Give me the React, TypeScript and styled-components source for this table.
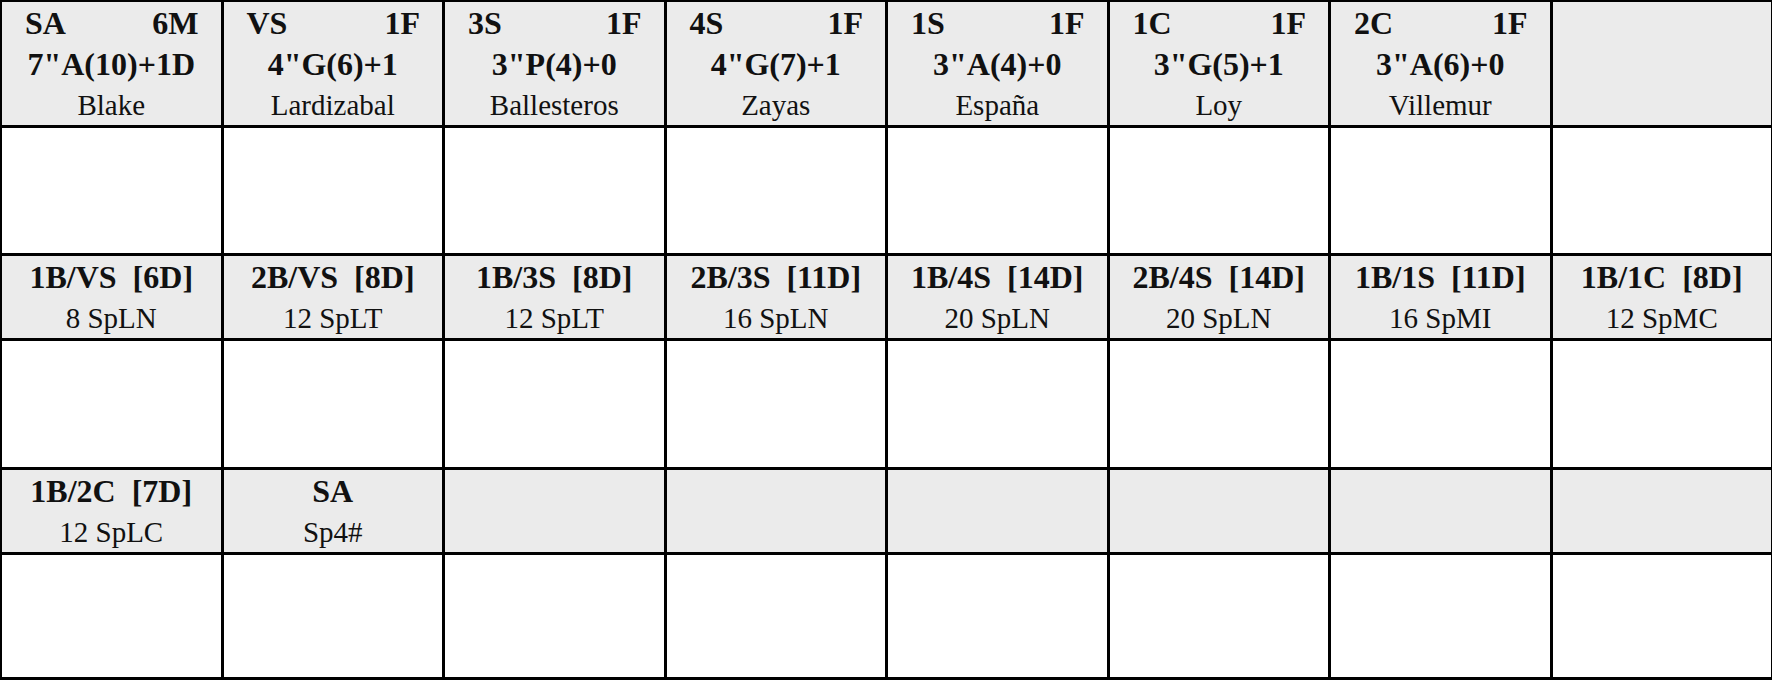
import { createGlobalStyle } from "styled-components";
import styled from "styled-components";

const GlobalStyle = createGlobalStyle`
  html, body {
    margin: 0;
    padding: 0;
    overflow: hidden;
    background: #ffffff;
  }
  body {
    font-family: "Liberation Serif", "Times New Roman", serif;
    color: #111;
  }
`;

type Leader = {
  unit: string;
  count: string;
  stats: string;
  name: string;
};

type Battery = {
  title: string;
  detail: string;
};

const leaders: (Leader | null)[] = [
  { unit: "SA", count: "6M", stats: '7"A(10)+1D', name: "Blake" },
  { unit: "VS", count: "1F", stats: '4"G(6)+1', name: "Lardizabal" },
  { unit: "3S", count: "1F", stats: '3"P(4)+0', name: "Ballesteros" },
  { unit: "4S", count: "1F", stats: '4"G(7)+1', name: "Zayas" },
  { unit: "1S", count: "1F", stats: '3"A(4)+0', name: "España" },
  { unit: "1C", count: "1F", stats: '3"G(5)+1', name: "Loy" },
  { unit: "2C", count: "1F", stats: '3"A(6)+0', name: "Villemur" },
  null,
];

const batteries: (Battery | null)[] = [
  { title: "1B/VS  [6D]", detail: "8 SpLN" },
  { title: "2B/VS  [8D]", detail: "12 SpLT" },
  { title: "1B/3S  [8D]", detail: "12 SpLT" },
  { title: "2B/3S  [11D]", detail: "16 SpLN" },
  { title: "1B/4S  [14D]", detail: "20 SpLN" },
  { title: "2B/4S  [14D]", detail: "20 SpLN" },
  { title: "1B/1S  [11D]", detail: "16 SpMI" },
  { title: "1B/1C  [8D]", detail: "12 SpMC" },
];

const reserves: (Battery | null)[] = [
  { title: "1B/2C  [7D]", detail: "12 SpLC" },
  { title: "SA", detail: "Sp4#" },
  null,
  null,
  null,
  null,
  null,
  null,
];

const App = () => {
  return (
    <>
      <GlobalStyle />
      <Sheet>
        {leaders.map((l, i) => (
          <Cell key={"l" + i} $shaded>
            {l && (
              <>
                <TopLine>
                  <span>{l.unit}</span>
                  <span>{l.count}</span>
                </TopLine>
                <BoldLine>{l.stats}</BoldLine>
                <PlainLine>{l.name}</PlainLine>
              </>
            )}
          </Cell>
        ))}
        {leaders.map((_, i) => (
          <Cell key={"a" + i} />
        ))}
        {batteries.map((b, i) => (
          <Cell key={"b" + i} $shaded>
            {b && (
              <>
                <BoldLine>{b.title}</BoldLine>
                <PlainLine>{b.detail}</PlainLine>
              </>
            )}
          </Cell>
        ))}
        {batteries.map((_, i) => (
          <Cell key={"c" + i} />
        ))}
        {reserves.map((r, i) => (
          <Cell key={"r" + i} $shaded>
            {r && (
              <>
                <BoldLine>{r.title}</BoldLine>
                <PlainLine>{r.detail}</PlainLine>
              </>
            )}
          </Cell>
        ))}
        {reserves.map((_, i) => (
          <Cell key={"d" + i} />
        ))}
      </Sheet>
    </>
  );
};

export default App;

const Sheet = styled.div`
  display: grid;
  grid-template-columns: repeat(8, 221.5px);
  grid-template-rows: 126px 128px 85px 129px 85px 125px;
  width: max-content;
  border-top: 2px solid #000;
  border-left: 2px solid #000;
`;

const Cell = styled.div<{ $shaded?: boolean }>`
  box-sizing: border-box;
  display: flex;
  flex-direction: column;
  padding-top: 1px;
  border-right: 3px solid #000;
  border-bottom: 3px solid #000;
  background: ${(p) => (p.$shaded ? "#ebebeb" : "#ffffff")};
  text-align: center;
  overflow: hidden;
`;

const TopLine = styled.div`
  display: flex;
  justify-content: space-between;
  padding: 0 22px 0 23px;
  font-size: 32px;
  font-weight: 700;
  line-height: 41px;
`;

const BoldLine = styled.div`
  font-size: 32px;
  font-weight: 700;
  line-height: 41px;
  white-space: pre;
`;

const PlainLine = styled.div`
  font-size: 29px;
  font-weight: 400;
  line-height: 41px;
  white-space: pre;
`;
